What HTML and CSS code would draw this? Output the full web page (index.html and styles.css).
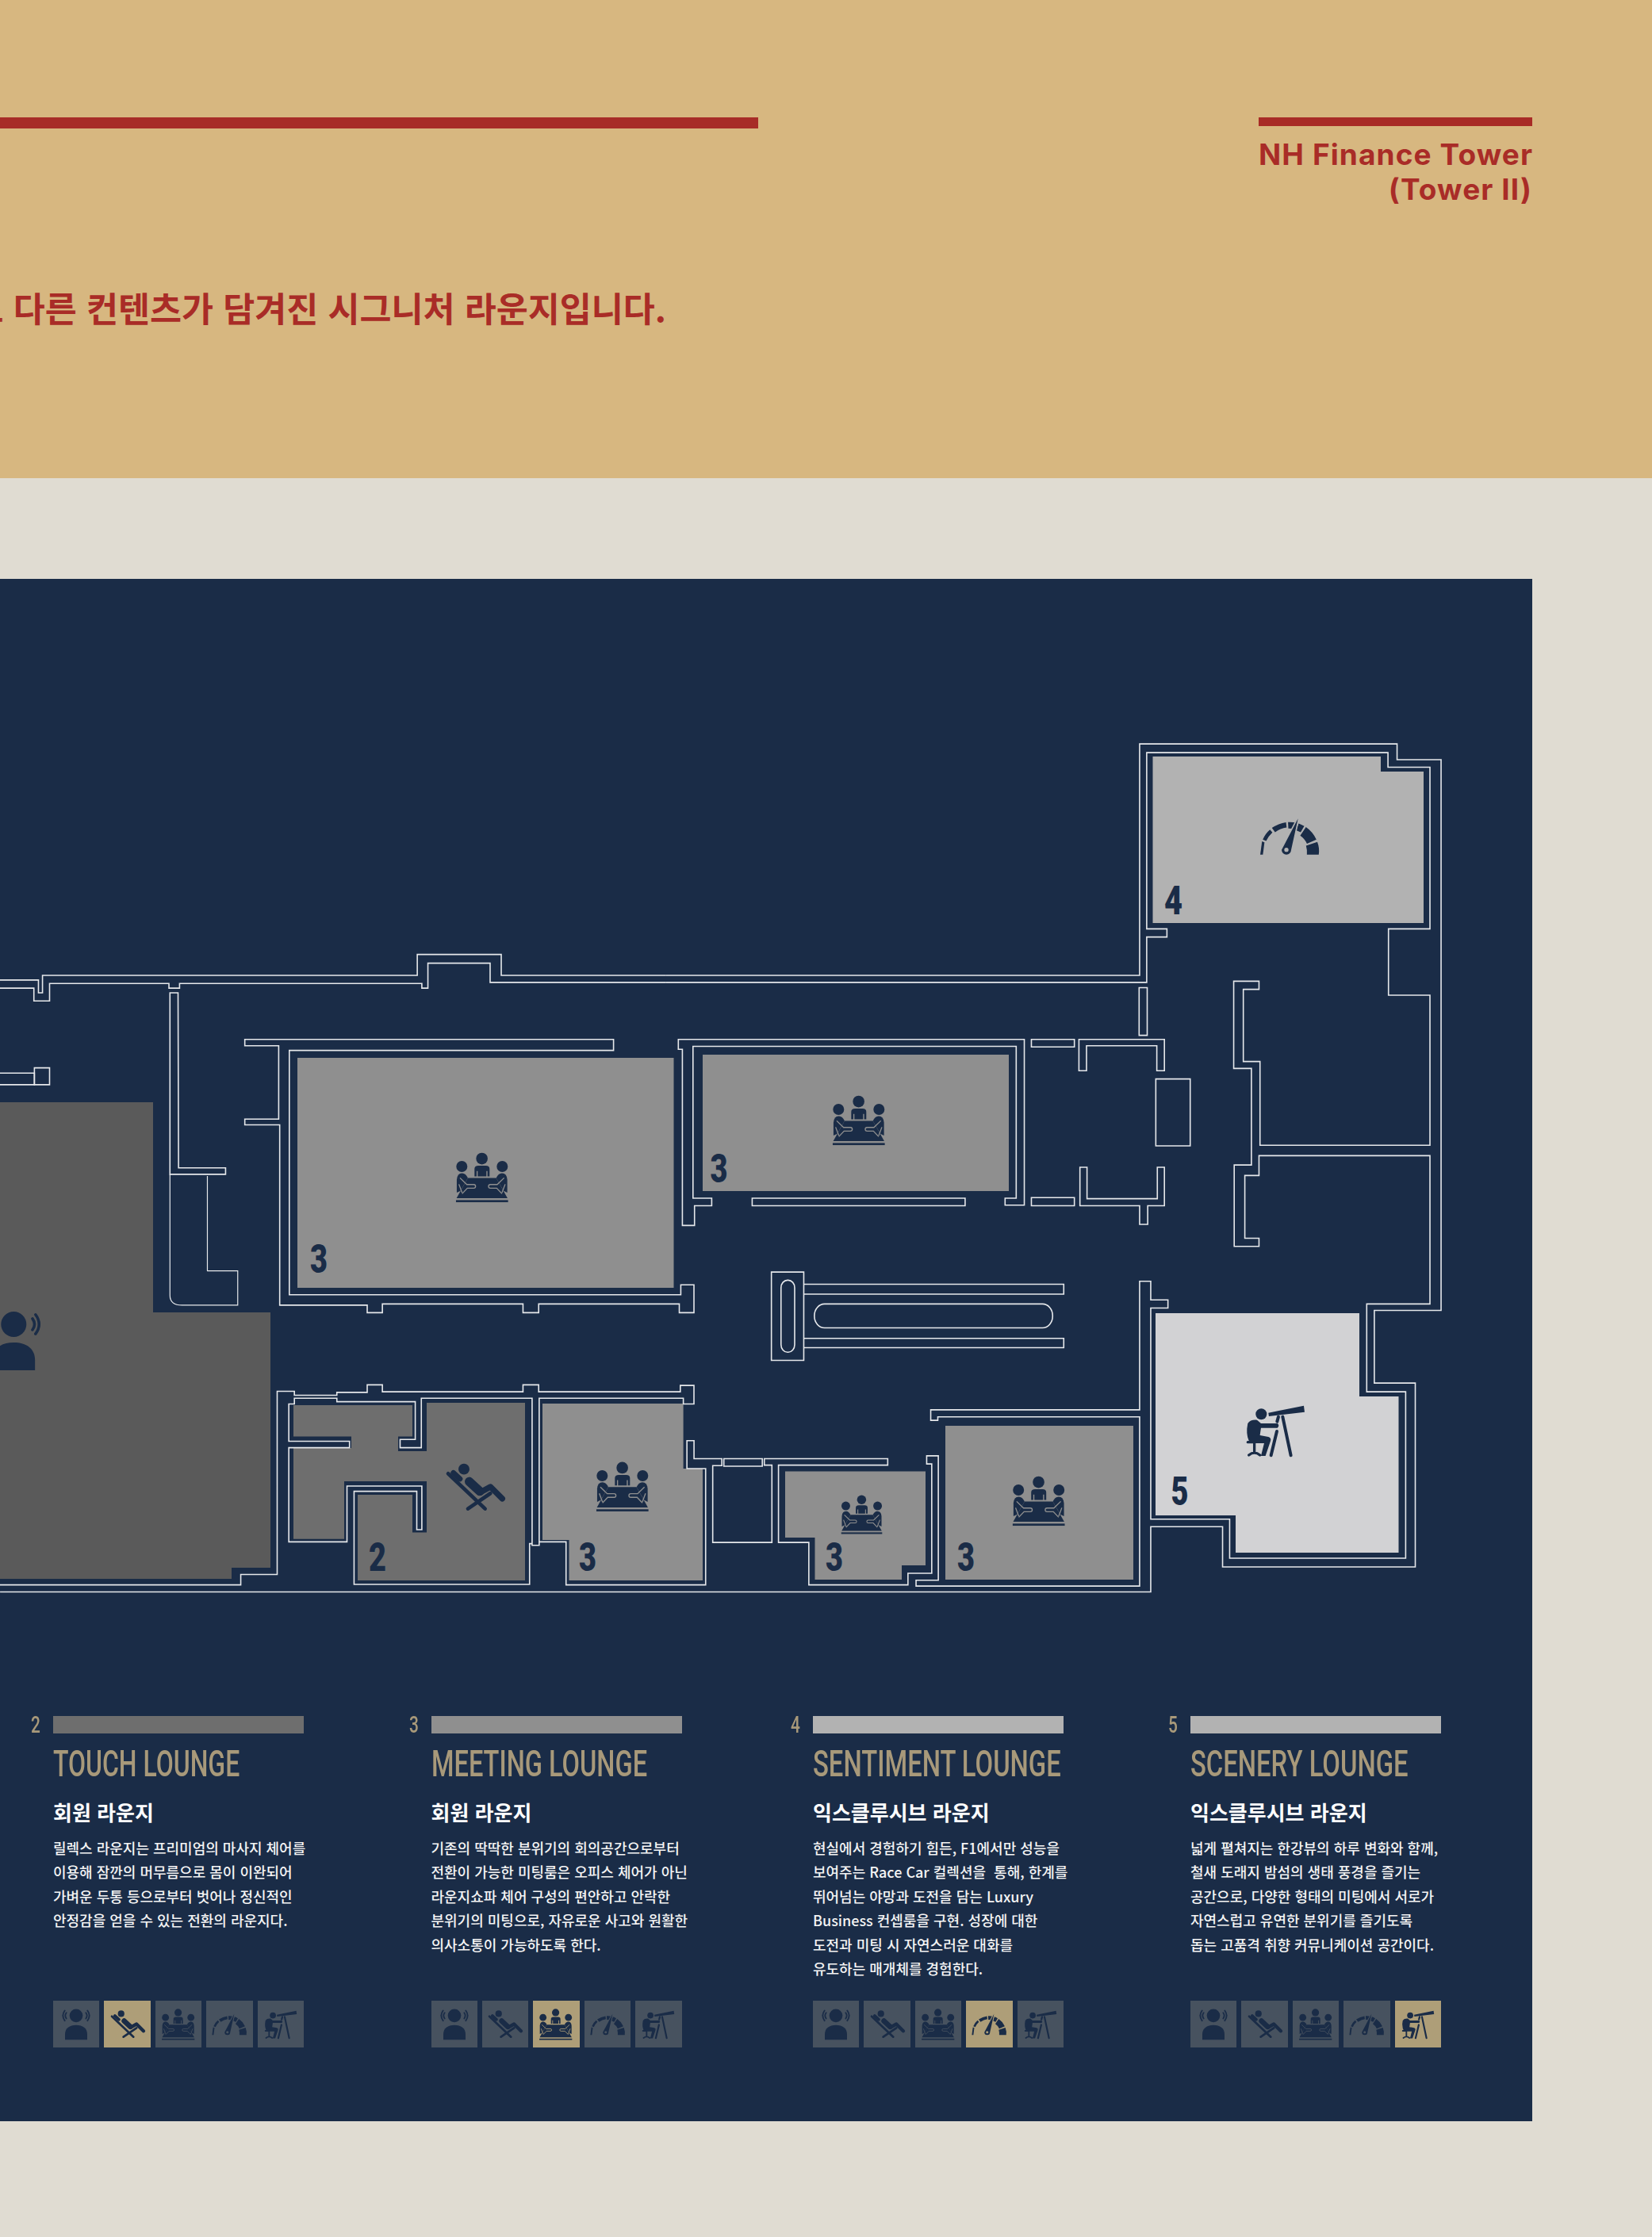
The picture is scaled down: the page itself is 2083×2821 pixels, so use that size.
FILE: index.html
```html
<!DOCTYPE html>
<html lang="ko">
<head>
<meta charset="utf-8">
<title>NH Finance Tower</title>
<link rel="stylesheet" href="styles.css">
</head>
<body>
<svg class="defs" aria-hidden="true">
  <defs>
    <mask id="m-meet" maskUnits="userSpaceOnUse" x="100" y="65" width="210" height="200">
      <rect x="100" y="65" width="210" height="200" fill="#fff"/>
      <g fill="none" stroke="#000" stroke-width="4">
        <path d="M120 166L146 191H172a7 7 0 0 1 0 14H148L128 226"/>
        <path d="M287 166L261 191H235a7 7 0 0 0 0 14H259L279 226"/>
        <path d="M116 190L128 222M291 190L279 222"/>
      </g>
    </mask>
    <mask id="m-gauge" maskUnits="userSpaceOnUse" x="260" y="90" width="235" height="150">
      <rect x="260" y="90" width="235" height="150" fill="#fff"/>
      <path d="M410 97L384 215H348Z" fill="#000" stroke="#000" stroke-width="10"/>
    </mask>
    <symbol id="i-person" viewBox="30 28 114 122">
      <circle cx="87" cy="57" r="25"/>
      <path d="M45 148V128C45 105 62 93 87 93S129 105 129 128V148Z"/>
      <path class="wave" d="M50 46Q42 57 50 68M124 46Q132 57 124 68M44 38Q30 57 44 76M130 38Q144 57 130 76"/>
    </symbol>
    <symbol id="i-chair" viewBox="120 70 235 190">
      <circle cx="195" cy="98" r="21"/>
      <path class="c14" d="M135 115L275 248M210 248L295 190"/>
      <path class="c20" d="M155 112L180 135"/>
      <path class="c30" d="M215 145L255 182"/>
      <path class="c22" d="M255 187L295 165L340 210"/>
    </symbol>
    <symbol id="i-meet" viewBox="100 65 210 200">
      <circle cx="203" cy="93" r="22"/>
      <circle cx="127" cy="123" r="21"/>
      <circle cx="280" cy="123" r="21"/>
      <path d="M175 160V132Q175 120 190 120H218Q232 120 232 132V160H224V140H220V160H187V140H183V160Z"/>
      <g mask="url(#m-meet)">
        <path d="M150 166H257L300 243H107Z"/>
        <path d="M108 222V172Q110 148 128 148Q142 148 150 166L122 215Z"/>
        <path d="M299 222V172Q297 148 279 148Q265 148 257 166L285 215Z"/>
      </g>
      <rect x="105" y="250" width="197" height="8"/>
    </symbol>
    <symbol id="i-gauge" viewBox="260 90 235 150">
      <g mask="url(#m-gauge)">
        <path d="M267 233L273.700 183L283 186.500L277 233Z"/>
        <path d="M276.600 175.900Q286 154 303.700 138.500L313.100 148.900Q298 163 289.400 181.500Z"/>
        <path d="M311.200 132.300Q336 115 364.500 110.800L366.900 130.700Q343 134 323.200 148.300Z"/>
        <path d="M372.200 110.200Q388 109 403 112.800L397.600 136.200Q386 134 373.400 134.100Z"/>
        <path d="M412.300 115.400Q423 119 433.500 124.900L420 148.300Q411 144 402.600 140.700Z"/>
        <path d="M440 129Q465 146 479.400 175.900L443.800 191.700Q435 173 418.300 161.300Z"/>
        <path d="M483 184.900Q492 208 488.400 233H443.600Q445 215 440.400 199.500Z"/>
      </g>
      <path fill-rule="evenodd" d="M410 97L384 215A18 18 0 0 1 348 215ZM374 215a8 8 0 1 0-16 0a8 8 0 1 0 16 0Z"/>
    </symbol>
    <symbol id="i-scope" viewBox="85 115 240 215">
      <circle cx="151" cy="160" r="21"/>
      <path d="M178 155L312 128L315 152L180 168Z"/>
      <path class="c12" d="M232 170L263 316M210 225L188 316M216 170L211 188"/>
      <path d="M100 195Q110 180 135 182L150 195H212Q222 203 212 212H150L146 240L178 246Q190 250 186 262L167 318H150L162 270H110Q95 250 97 215Z"/>
      <path class="c10" d="M100 266H122M125 270V302M104 315Q125 298 146 315"/>
    </symbol>
  </defs>
</svg>

<header class="hero">
  <div class="hero-main">
    <div class="bar-long"></div>
    <p class="lead-wrap"><span class="lead">각기 서로 다른 컨텐츠가 담겨진 시그니처 라운지입니다.</span></p>
  </div>
  <div class="hero-side">
    <div class="bar-short"></div>
    <p class="tower">NH Finance Tower<br>(Tower II)</p>
  </div>
</header>

<main class="panel">
  <svg class="plan" viewBox="0 730 1932 1434" role="img" aria-label="라운지 평면도">
    <polygon class="r1" points="0,1390 193,1390 193,1655 341,1655 341,1977 292,1977 292,1991 0,1991"/>
    <polygon class="r2" points="370,1772 520,1772 520,1811.600 502,1811.600 502,1830 538,1830 538,1769 662,1769 662,1993 451,1993 451,1885 520,1885 520,1932.600 538,1932.600 538,1868 434,1868 434,1940.700 370,1940.700 370,1826 443,1826 443,1811.600 370,1811.600"/>
    <rect class="r3" x="375" y="1334" width="474.500" height="290"/>
    <rect class="r3" x="886" y="1330" width="386" height="172"/>
    <polygon class="r3" points="684,1770 861.600,1770 861.600,1852 886,1852 886,1993 717.500,1993 717.500,1942 684,1942"/>
    <polygon class="r3" points="990,1855.600 1167,1855.600 1167,1974 1137,1974 1137,1992 1027.500,1992 1027.500,1939 990,1939"/>
    <rect class="r3" x="1192" y="1798" width="237" height="194"/>
    <polygon class="r4" points="1453.500,954 1741,954 1741,973 1795,973 1795,1164 1453.500,1164"/>
    <polygon class="r5" points="1457,1656 1714,1656 1714,1761 1763.500,1761 1763.500,1958 1558,1958 1558,1911 1457,1911"/>

    <g transform="translate(0 900) scale(.63776 .73342)">
      <path class="w" d="M0 458H76V480H84V450H825V414H991V450H1317"/>
      <path class="w" d="M0 472H67V494H98V464H334V472H355V464H834V472H846V429H969V462H1317"/>
      <path class="w" d="M484 560H1213V579H572V999H1346V982H1372V1030H1343V1015H1065V1030H1034V1015H756V1030H726V1017H553V707H484V697H551V571H484Z"/>
      <path class="w" d="M336 480H352L353 781H446V792H336Z"/>
      <path class="w t" d="M336 792V1000Q336 1017 360 1017H470V958H410V795"/>
      <path class="w" d="M0 618H68V638H0"/>
      <rect class="w" x="68" y="609" width="30" height="29"/>
      <path class="w" d="M0 1498H476V1480H548V1165H582V1172H666V1167H726V1154H756V1166H1034V1154H1065V1166H1345V1155H1372V1187H1351V1177H1066V1430H1052V1177H833V1262H791V1248H821V1183H666V1177H582V1187H571V1251H691V1262H571V1424H686V1328H834V1403H824V1337H700V1497H1047V1427H1052"/>
    </g>

    <g transform="translate(840 900) scale(.63776 .73342)">
      <path class="w" d="M0 450H936V52H1445V79H1532V1026H1400V1151H1481V1467H1100V1398H958V1510H-1317"/>
      <path class="w" d="M0 462H950V384H990V370H950V67H1427V92H1510V370H1428V484H1510V742H1174V598H1141V474H1172V460H1122V610H1157V776H1123V916H1172V902H1144V794H1172V760H1510V1015H1385V1166H1462V1452H1114V1385H958V1022H992V1008H958V976H936V1197H523V1215H537V1209H936V1500H494V1490H538V1276H515V1290H525V1478H478V1498H282V1425H222V1292H438V1281H194V1292H209V1425H92V1293H110V1281H55V1250H41V1298H78V1498H-198V1424H-251"/>
      <path class="w" d="M24 560H708V845H670V833H692V572H53V833H90V846H56V880H32V577H24Z"/>
      <rect class="w" x="170" y="833" width="421" height="13"/>
      <rect class="w" x="722" y="560" width="85" height="13"/>
      <rect class="w" x="722" y="832" width="85" height="14"/>
      <path class="w" d="M816 614V560H985V614H970V571H831V614Z"/>
      <rect class="w" x="968" y="628" width="68" height="115"/>
      <path class="w" d="M818 780H832V834H971V780H985V846H952V878H936V846H818Z"/>
      <rect class="w" x="935" y="471" width="16" height="82"/>
      <rect class="w" x="208" y="960" width="64" height="152"/>
      <rect class="w" x="227" y="974" width="27" height="124" rx="13"/>
      <path class="w" d="M272 981H786V998H272M272 1074H786V1090H272"/>
      <rect class="w" x="293" y="1015" width="471" height="41" rx="20"/>
      <rect class="w" x="114" y="1281" width="76" height="13"/>
    </g>

    <use href="#i-person" x="-19.200" y="1651.400" width="73" height="78"/>
    <use href="#i-meet" x="573.300" y="1451.700" width="70" height="66.700"/>
    <use href="#i-meet" x="1048.300" y="1379.700" width="70" height="66.700"/>
    <use href="#i-meet" x="750.300" y="1841.600" width="70" height="66.700"/>
    <use href="#i-meet" x="1059.400" y="1883.900" width="55" height="52.400"/>
    <use href="#i-meet" x="1275.200" y="1859.700" width="70" height="66.700"/>
    <use href="#i-gauge" x="1586.700" y="1030" width="78.300" height="50"/>
    <use href="#i-scope" x="1568.300" y="1768.300" width="80" height="71.700"/>
    <use href="#i-chair" x="560" y="1843.300" width="78.300" height="63.300"/>

    <text class="n" x="391" y="1605" textLength="22" lengthAdjust="spacingAndGlyphs">3</text>
    <text class="n" x="895.500" y="1491" textLength="22" lengthAdjust="spacingAndGlyphs">3</text>
    <text class="n" x="1468" y="1153" textLength="23" lengthAdjust="spacingAndGlyphs">4</text>
    <text class="n" x="465" y="1981" textLength="22" lengthAdjust="spacingAndGlyphs">2</text>
    <text class="n" x="730" y="1981" textLength="22" lengthAdjust="spacingAndGlyphs">3</text>
    <text class="n" x="1041" y="1981" textLength="22" lengthAdjust="spacingAndGlyphs">3</text>
    <text class="n" x="1207" y="1981" textLength="22" lengthAdjust="spacingAndGlyphs">3</text>
    <text class="n" x="1476.500" y="1898" textLength="22" lengthAdjust="spacingAndGlyphs">5</text>
  </svg>

  <section class="legend">
    <article class="col">
      <div class="head"><span class="num">2</span><span class="bar b2"></span></div>
      <h2 class="title t-touch">TOUCH LOUNGE</h2>
      <h3 class="sub">회원 라운지</h3>
      <p class="body">릴렉스 라운지는 프리미엄의 마사지 체어를<br>이용해 잠깐의 머무름으로 몸이 이완되어<br>가벼운 두통 등으로부터 벗어나 정신적인<br>안정감을 얻을 수 있는 전환의 라운지다.</p>
      <div class="tiles">
        <div class="tile"><svg class="ico person"><use href="#i-person"/></svg></div>
        <div class="tile on"><svg class="ico chair"><use href="#i-chair"/></svg></div>
        <div class="tile"><svg class="ico meet"><use href="#i-meet"/></svg></div>
        <div class="tile"><svg class="ico gauge"><use href="#i-gauge"/></svg></div>
        <div class="tile"><svg class="ico scope"><use href="#i-scope"/></svg></div>
      </div>
    </article>
    <article class="col">
      <div class="head"><span class="num">3</span><span class="bar b3"></span></div>
      <h2 class="title t-meeting">MEETING LOUNGE</h2>
      <h3 class="sub">회원 라운지</h3>
      <p class="body">기존의 딱딱한 분위기의 회의공간으로부터<br>전환이 가능한 미팅룸은 오피스 체어가 아닌<br>라운지쇼파 체어 구성의 편안하고 안락한<br>분위기의 미팅으로, 자유로운 사고와 원활한<br>의사소통이 가능하도록 한다.</p>
      <div class="tiles">
        <div class="tile"><svg class="ico person"><use href="#i-person"/></svg></div>
        <div class="tile"><svg class="ico chair"><use href="#i-chair"/></svg></div>
        <div class="tile on"><svg class="ico meet"><use href="#i-meet"/></svg></div>
        <div class="tile"><svg class="ico gauge"><use href="#i-gauge"/></svg></div>
        <div class="tile"><svg class="ico scope"><use href="#i-scope"/></svg></div>
      </div>
    </article>
    <article class="col">
      <div class="head"><span class="num">4</span><span class="bar b4"></span></div>
      <h2 class="title t-sentiment">SENTIMENT LOUNGE</h2>
      <h3 class="sub">익스클루시브 라운지</h3>
      <p class="body">현실에서 경험하기 힘든, F1에서만 성능을<br>보여주는 Race Car 컬렉션을 &nbsp;통해, 한계를<br>뛰어넘는 야망과 도전을 담는 Luxury<br>Business 컨셉룸을 구현. 성장에 대한<br>도전과 미팅 시 자연스러운 대화를<br>유도하는 매개체를 경험한다.</p>
      <div class="tiles">
        <div class="tile"><svg class="ico person"><use href="#i-person"/></svg></div>
        <div class="tile"><svg class="ico chair"><use href="#i-chair"/></svg></div>
        <div class="tile"><svg class="ico meet"><use href="#i-meet"/></svg></div>
        <div class="tile on"><svg class="ico gauge"><use href="#i-gauge"/></svg></div>
        <div class="tile"><svg class="ico scope"><use href="#i-scope"/></svg></div>
      </div>
    </article>
    <article class="col">
      <div class="head"><span class="num">5</span><span class="bar b4"></span></div>
      <h2 class="title t-scenery">SCENERY LOUNGE</h2>
      <h3 class="sub">익스클루시브 라운지</h3>
      <p class="body">넓게 펼쳐지는 한강뷰의 하루 변화와 함께,<br>철새 도래지 밤섬의 생태 풍경을 즐기는<br>공간으로, 다양한 형태의 미팅에서 서로가<br>자연스럽고 유연한 분위기를 즐기도록<br>돕는 고품격 취향 커뮤니케이션 공간이다.</p>
      <div class="tiles">
        <div class="tile"><svg class="ico person"><use href="#i-person"/></svg></div>
        <div class="tile"><svg class="ico chair"><use href="#i-chair"/></svg></div>
        <div class="tile"><svg class="ico meet"><use href="#i-meet"/></svg></div>
        <div class="tile"><svg class="ico gauge"><use href="#i-gauge"/></svg></div>
        <div class="tile on"><svg class="ico scope"><use href="#i-scope"/></svg></div>
      </div>
    </article>
  </section>
</main>
</body>
</html>
```
FILE: styles.css
```css
* { box-sizing: border-box; }
html, body { margin: 0; padding: 0; }
body {
  width: 2083px;
  height: 2821px;
  overflow: hidden;
  background: #e0dcd2;
  font-family: "Noto Sans CJK KR", "Noto Sans", sans-serif;
}
.defs { display: block; width: 0; height: 0; }

.hero {
  height: 603px;
  background: #d7b780;
  display: flex;
  justify-content: space-between;
  padding: 148px 151px 0 0;
  color: #a92c27;
}
.hero-main { width: 956px; }
.bar-long { height: 14px; background: #a72c27; }
.lead-wrap {
  margin: 196px 0 0;
  width: 840px;
  display: flex;
  justify-content: flex-end;
  overflow: hidden;
  white-space: nowrap;
}
.lead { font-size: 43.500px; font-weight: 700; line-height: 60px; flex: none; }
.hero-side { width: 345px; }
.bar-short { height: 11px; background: #a82b26; }
.tower {
  margin: 14px 0 0;
  text-align: right;
  font-family: Inter, "Noto Sans", sans-serif;
  font-weight: 700;
  font-size: 37px;
  letter-spacing: 1.100px;
  line-height: 44px;
  white-space: nowrap;
}

.panel {
  margin-top: 127px;
  width: 1932px;
  height: 1945px;
  background: #1a2c47;
}
.plan { display: block; width: 1932px; height: 1434px; fill: #1a2c47; }
.r1 { fill: #5a5a5a; }
.r2 { fill: #6e6e6e; }
.r3 { fill: #8f8f8f; }
.r4 { fill: #b2b2b2; }
.r5 { fill: #d2d2d4; }
.w {
  fill: none;
  stroke: #e6e8eb;
  stroke-width: 1.600;
  vector-effect: non-scaling-stroke;
}
.t { stroke-width: 1.200; }
.n {
  font-family: Roboto, sans-serif;
  font-weight: 900;
  font-size: 50px;
  fill: #1a2c47;
}
.wave, .c10, .c12, .c14, .c20, .c22, .c30 {
  fill: none;
  stroke: #1a2c47;
  stroke-linecap: round;
  stroke-linejoin: round;
}
.wave { stroke-width: 5.500; }
.c10 { stroke-width: 10; }
.c12 { stroke-width: 12; }
.c14 { stroke-width: 14; }
.c20 { stroke-width: 20; }
.c22 { stroke-width: 22; }
.c30 { stroke-width: 34; }

.legend {
  display: grid;
  grid-template-columns: 476.500px 481.500px 476px 317px;
  padding-left: 67px;
}
.col { height: 418px; width: 316px; display: flex; flex-direction: column; }
.head { display: flex; height: 22px; margin-left: -28px; }
.num {
  width: 28px;
  font-family: Roboto, sans-serif;
  font-weight: 500;
  font-size: 29px;
  line-height: 22px;
  color: #a8997a;
  transform: scaleX(.72);
  transform-origin: left center;
}
.bar { flex: 1; }
.b2 { background: #6e6e6e; }
.b3 { background: #8f8f8f; }
.b4 { background: #b2b2b2; }
.title {
  margin: 12px 0 0;
  font-family: Roboto, sans-serif;
  font-weight: 500;
  font-size: 46px;
  line-height: 52px;
  color: #a8997a;
  white-space: nowrap;
  transform-origin: left center;
}
.t-touch { transform: scaleX(.695); }
.t-meeting { transform: scaleX(.708); }
.t-sentiment { transform: scaleX(.713); }
.t-scenery { transform: scaleX(.713); }
.sub {
  margin: 16px 0 0;
  font-size: 26px;
  font-weight: 700;
  line-height: 38px;
  color: #fff;
  white-space: nowrap;
}
.body {
  margin: 11px 0 0;
  font-size: 18px;
  font-weight: 500;
  line-height: 30.400px;
  color: #f4f4f4;
  white-space: nowrap;
}
.tiles {
  margin-top: auto;
  display: grid;
  grid-template-columns: repeat(5, 1fr);
  gap: 6px;
}
.tile {
  height: 59px;
  background: #47525f;
  display: flex;
  align-items: center;
  justify-content: center;
}
.tile.on { background: #ae9e78; }
.ico { display: block; fill: #1a2c47; }
.person { width: 38px; height: 41px; }
.chair { width: 46px; height: 37px; }
.meet { width: 44px; height: 42px; }
.gauge { width: 46px; height: 30px; }
.scope { width: 44px; height: 40px; }
```
